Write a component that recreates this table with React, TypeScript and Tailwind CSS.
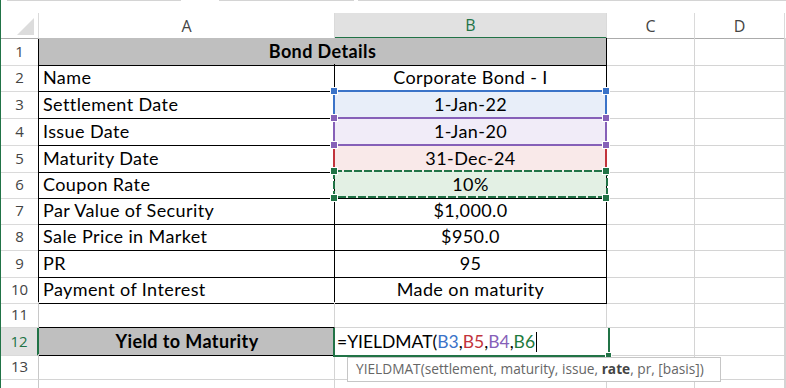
import React from "react";

const GRID = "grid grid-cols-[38px_296px_272px_88px_90px_1fr]";
const CELL = "font-['Lato','Liberation_Sans',sans-serif] text-[18px] tracking-[0.4px] text-black";
const HDR = "font-['Open_Sans','Liberation_Sans',sans-serif] text-[15px]";

type Mark = "blue" | "purple" | "red" | "green";

const rows: { n: number; h: string; a: string; b: string; mark?: Mark }[] = [
  { n: 2, h: "h-[27px]", a: "Name", b: "Corporate Bond - I" },
  { n: 3, h: "h-[27px]", a: "Settlement Date", b: "1-Jan-22", mark: "blue" },
  { n: 4, h: "h-[27px]", a: "Issue Date", b: "1-Jan-20", mark: "purple" },
  { n: 5, h: "h-[26px]", a: "Maturity Date", b: "31-Dec-24", mark: "red" },
  { n: 6, h: "h-[26px]", a: "Coupon Rate", b: "10%", mark: "green" },
  { n: 7, h: "h-[26px]", a: "Par Value of Security", b: "$1,000.0" },
  { n: 8, h: "h-[27px]", a: "Sale Price in Market", b: "$950.0" },
  { n: 9, h: "h-[26px]", a: "PR", b: "95" },
  { n: 10, h: "h-[26px]", a: "Payment of Interest", b: "Made on maturity" },
];

const markBg: Record<Mark, string> = {
  blue: "bg-[#e8eef9]",
  purple: "bg-[#f1ecf8]",
  red: "bg-[#f9e9e9]",
  green: "bg-[#e3f0e4]",
};

function Handle({ pos, color }: { pos: string; color: string }) {
  return <span className={`absolute w-[6px] h-[6px] shadow-[0_0_0_1px_#ffffff] ${pos} ${color}`} />;
}

function Corners({ color }: { color: string }) {
  return (
    <>
      <Handle pos="-left-[2px] -top-[2px]" color={color} />
      <Handle pos="-right-[2px] -top-[2px]" color={color} />
      <Handle pos="-left-[2px] -bottom-[2px]" color={color} />
      <Handle pos="-right-[2px] -bottom-[2px]" color={color} />
    </>
  );
}

function Overlay({ mark }: { mark: Mark }) {
  if (mark === "blue")
    return (
      <div className="absolute -left-[2px] -top-[1px] -right-[1px] -bottom-[1px] shadow-[inset_0_0_0_2px_#3b73c8] z-10">
        <Corners color="bg-[#3b73c8]" />
      </div>
    );
  if (mark === "purple")
    return (
      <div className="absolute -left-[2px] -top-[1px] -right-[1px] -bottom-[1px] shadow-[inset_0_0_0_2px_#8660b8] z-20">
        <Corners color="bg-[#8660b8]" />
      </div>
    );
  if (mark === "red")
    return <div className="absolute -left-[2px] -top-[1px] -right-[1px] -bottom-[1px] border-x-2 border-[#c2343c] z-10" />;
  return (
    <div className="absolute -left-[2px] -top-[1px] -right-[1px] -bottom-[1px] z-20">
      <svg width="275" height="28" className="absolute left-0 top-0">
        <rect x="1" y="1" width="273" height="26" fill="none" stroke="#217346" strokeWidth="2" strokeDasharray="8 2" />
      </svg>
      <Corners color="bg-[#217346]" />
    </div>
  );
}

function RowHead({ n, black, selected }: { n: number; black?: boolean; selected?: boolean }) {
  return (
    <div
      className={`${HDR} tracking-normal flex items-center justify-center border-b border-b-[#dadada] ${
        selected
          ? "bg-[#e1e1e1] text-[#217346] border-r-2 border-r-[#217346]"
          : black
          ? "text-[#444] border-r border-r-black"
          : "text-[#444] border-r border-r-[#c8c8c8]"
      }`}
    >
      {n}
    </div>
  );
}

function Blank() {
  return <div className="border-r border-b border-[#d4d4d4]" />;
}

export default function App() {
  return (
    <div className="relative w-[786px] h-[388px] overflow-hidden bg-white border-l border-[#217346]">
      {/* formula bar edge */}
      <div className="flex h-[13px]">
        <div className="ml-[6px] w-[174px] border-t border-[#d4d4d4]" />
        <div className="ml-[38px] w-[135px] border-t border-[#d4d4d4]" />
        <div className="ml-[4px] flex-1 border-t border-[#d4d4d4]" />
      </div>

      {/* column headers */}
      <div className={`${GRID} h-[25px] ${HDR} text-[16px] text-[#444]`}>
        <div className="relative border-r border-b border-r-[#dadada] border-b-[#ababab]">
          <svg width="18" height="17" className="absolute left-[15px] top-[5px]">
            <polygon points="18,0 18,17 1,17" fill="#dcdcdc" />
          </svg>
        </div>
        <div className="flex items-center justify-center border-r border-b border-r-[#dadada] border-b-[#ababab]">A</div>
        <div className="flex items-center justify-center bg-[#e1e1e1] text-[#217346] border-r border-r-[#dadada] border-b-2 border-b-[#217346]">
          B
        </div>
        <div className="flex items-center justify-center border-r border-b border-r-[#dadada] border-b-[#ababab]">C</div>
        <div className="flex items-center justify-center border-r border-b border-r-[#dadada] border-b-[#ababab]">D</div>
        <div className="border-b border-b-[#ababab]" />
      </div>

      {/* row 1 */}
      <div className={`${GRID} h-[26px] ${CELL}`}>
        <RowHead n={1} black />
        <div className="col-span-2 flex items-center justify-center bg-[#bfbfbf] font-bold border-r border-b border-black">
          Bond Details
        </div>
        <Blank />
        <Blank />
        <Blank />
      </div>

      {rows.map((r) => (
        <div key={r.n} className={`${GRID} ${r.h} ${CELL}`}>
          <RowHead n={r.n} black />
          <div className="flex items-center pl-[4px] border-r border-b border-black whitespace-nowrap">{r.a}</div>
          <div
            className={`relative flex items-center justify-center border-r border-b border-black whitespace-nowrap ${
              r.mark ? markBg[r.mark] : ""
            }`}
          >
            {r.b}
            {r.mark && <Overlay mark={r.mark} />}
          </div>
          <Blank />
          <Blank />
          <Blank />
        </div>
      ))}

      {/* row 11 */}
      <div className={`${GRID} h-[26px] ${CELL}`}>
        <RowHead n={11} />
        <div className="border-r border-b border-r-[#d4d4d4] border-b-black" />
        <Blank />
        <Blank />
        <Blank />
        <Blank />
      </div>

      {/* row 12 */}
      <div className={`${GRID} h-[26px] ${CELL}`}>
        <RowHead n={12} selected />
        <div className="flex items-center justify-center bg-[#bfbfbf] font-bold border-b border-black">
          Yield to Maturity
        </div>
        <div className="relative flex items-center pl-[2px] text-[17.5px] tracking-normal whitespace-nowrap z-10">
          <div className="absolute -left-[2px] top-0 -right-[3px] -bottom-[1px] border-x-2 border-b-2 border-[#217346]">
            <span className="absolute -right-[3px] -bottom-[3px] w-[5px] h-[5px] bg-[#217346] shadow-[0_0_0_1px_#ffffff]" />
          </div>
          <span>=YIELDMAT(</span>
          <span className="text-[#3b73c8]">B3</span>
          <span>,</span>
          <span className="text-[#c2343c]">B5</span>
          <span>,</span>
          <span className="text-[#8660b8]">B4</span>
          <span>,</span>
          <span className="text-[#1e7a3c]">B6</span>
          <span className="ml-[1px] w-[1px] h-[20px] bg-black" />
        </div>
        <Blank />
        <Blank />
        <Blank />
      </div>

      {/* row 13 */}
      <div className={`${GRID} h-[26px] ${CELL}`}>
        <RowHead n={13} />
        <Blank />
        <Blank />
        <Blank />
        <Blank />
        <Blank />
      </div>

      {/* row 14 */}
      <div className={`${GRID} h-[26px] ${CELL}`}>
        <RowHead n={14} />
        <Blank />
        <Blank />
        <Blank />
        <Blank />
        <Blank />
      </div>

      {/* function tooltip */}
      <div className="absolute left-[346px] top-[357px] w-[374px] h-[25px] z-30 flex items-center pl-[8px] bg-white border border-[#c6c6c6] font-['Open_Sans','Liberation_Sans',sans-serif] text-[13.7px] text-[#666] whitespace-pre">
        YIELDMAT(settlement, maturity, issue, <b className="text-[#444]">rate</b>, pr, [basis])
      </div>
    </div>
  );
}
